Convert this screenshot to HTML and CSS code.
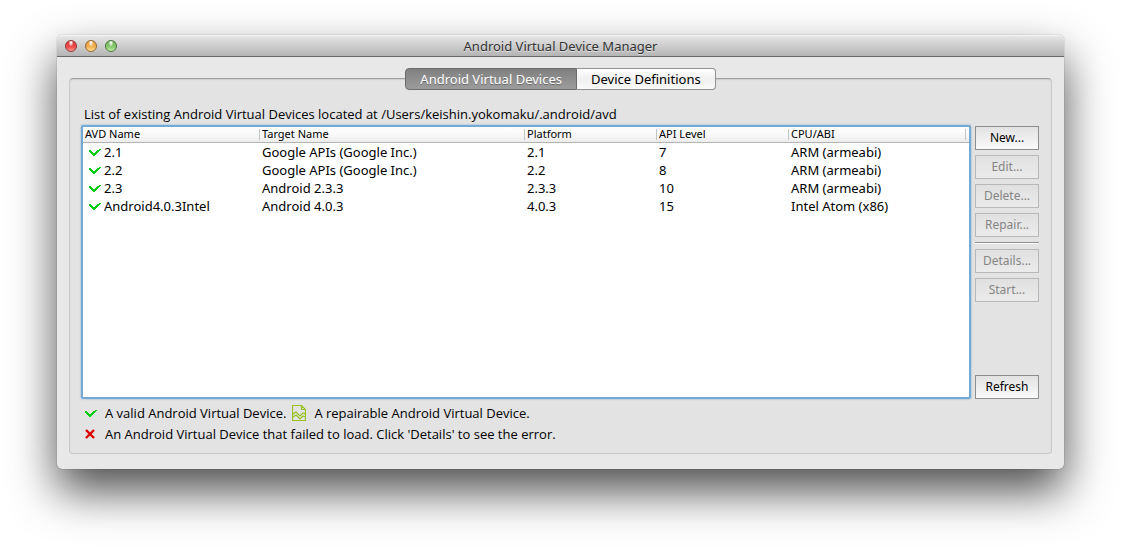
FILE: index.html
```html
<!DOCTYPE html>
<html lang="en">
<head>
<meta charset="utf-8">
<title>Android Virtual Device Manager</title>
<link rel="stylesheet" href="styles.css">
</head>
<body>
<svg class="defs" aria-hidden="true">
  <symbol id="check" viewBox="0 0 12 8"><path shape-rendering="crispEdges" d="M0 2h2v1h1v1h1v1h2V4h1V3h1V2h2V1h2v1h-1v1h-1v1H9v1H8v1H7v1H6v1H4V7H3V6H2V5H1V4H0z" fill="#00cc14"/></symbol>
  <symbol id="cross" viewBox="0 0 10 10"><path d="M1 1l8 8M9 1L1 9" stroke="#dc0000" stroke-width="2.4" fill="none"/></symbol>
  <symbol id="repair" viewBox="0 0 14 16"><path d="M.5.5h9l4 4v11H.5zM9.500.5v4h4M1 9l3-2 4 4 3-3 2 1M1 12l3-2 4 4 3-3 2 1" stroke="#98c11d" stroke-width="1.2" fill="none"/></symbol>
</svg>
<main class="window">
  <header class="titlebar">
    <div class="lights">
      <button class="light red" aria-label="Close"></button>
      <button class="light amber" aria-label="Minimize"></button>
      <button class="light green" aria-label="Zoom"></button>
    </div>
    <h1 class="title">Android Virtual Device Manager</h1>
  </header>
  <div class="content">
    <div class="tabs" role="tablist">
      <button class="tab selected" role="tab" aria-selected="true">Android Virtual Devices</button>
      <button class="tab" role="tab" aria-selected="false">Device Definitions</button>
    </div>
    <section class="panel">
      <p class="caption">List of existing Android Virtual Devices located at /Users/keishin.yokomaku/.android/avd</p>
      <div class="body">
        <div class="list" tabindex="0">
          <table class="devices">
            <colgroup><col class="c-name"><col class="c-target"><col class="c-small"><col class="c-small"><col class="c-cpu"><col></colgroup>
            <thead><tr><th>AVD Name</th><th>Target Name</th><th>Platform</th><th>API Level</th><th>CPU/ABI</th><th></th></tr></thead>
            <tbody>
              <tr><td><span class="name"><svg class="check"><use href="#check"/></svg>2.1</span></td><td>Google APIs (Google Inc.)</td><td>2.1</td><td>7</td><td>ARM (armeabi)</td><td></td></tr>
              <tr><td><span class="name"><svg class="check"><use href="#check"/></svg>2.2</span></td><td>Google APIs (Google Inc.)</td><td>2.2</td><td>8</td><td>ARM (armeabi)</td><td></td></tr>
              <tr><td><span class="name"><svg class="check"><use href="#check"/></svg>2.3</span></td><td>Android 2.3.3</td><td>2.3.3</td><td>10</td><td>ARM (armeabi)</td><td></td></tr>
              <tr><td><span class="name"><svg class="check"><use href="#check"/></svg>Android4.0.3Intel</span></td><td>Android 4.0.3</td><td>4.0.3</td><td>15</td><td>Intel Atom (x86)</td><td></td></tr>
            </tbody>
          </table>
        </div>
        <div class="actions">
          <button class="btn">New...</button>
          <button class="btn" disabled>Edit...</button>
          <button class="btn" disabled>Delete...</button>
          <button class="btn" disabled>Repair...</button>
          <hr class="rule">
          <button class="btn" disabled>Details...</button>
          <button class="btn" disabled>Start...</button>
          <button class="btn last">Refresh</button>
        </div>
      </div>
      <div class="legend">
        <div class="key"><span class="slot"><svg class="check"><use href="#check"/></svg></span><span>A valid Android Virtual Device.</span><svg class="repair"><use href="#repair"/></svg><span>A repairable Android Virtual Device.</span></div>
        <div class="key"><span class="slot"><svg class="cross"><use href="#cross"/></svg></span><span>An Android Virtual Device that failed to load. Click 'Details' to see the error.</span></div>
      </div>
    </section>
  </div>
</main>
</body>
</html>
```
FILE: styles.css
```css
* { box-sizing: border-box; }
body {
  margin: 0;
  min-height: 100vh;
  padding: 35px 57px 79px;
  display: flex;
  background: #fff;
  color: #000;
  font: 12px/18px "Noto Sans", "Open Sans", sans-serif;
}
button { font: inherit; margin: 0; padding: 0; }
.defs { position: absolute; width: 0; height: 0; }
.window {
  flex: 1;
  display: flex;
  flex-direction: column;
  background: #e8e8e8;
  border-radius: 5px;
  box-shadow: 0 0 1px rgba(0, 0, 0, .6), 0 22px 46px rgba(0, 0, 0, .7);
}
.titlebar {
  height: 22px;
  display: grid;
  grid-template-columns: 1fr auto 1fr;
  align-items: center;
  padding: 0 8px;
  border-bottom: 1px solid #686868;
  border-radius: 5px 5px 0 0;
  background: linear-gradient(#e8e8e8, #b4b4b4);
  box-shadow: inset 0 1px #f4f4f4;
}
.title { margin: 0; font-size: 13px; font-weight: 400; line-height: 20px; color: #333; text-shadow: 0 1px rgba(255, 255, 255, .5); }
.lights { display: flex; gap: 8px; }
.light { width: 12px; height: 12px; border: 1px solid #7a5a50; border-radius: 50%; }
.red { background: radial-gradient(ellipse at 50% 15%, #fff 0 5%, transparent 35%), linear-gradient(#d9403f, #f04a4a 60%, #ff9d98); border-color: #8c3533; }
.amber { background: radial-gradient(ellipse at 50% 15%, #fff 0 5%, transparent 35%), linear-gradient(#e09a45, #f2b352 60%, #ffe49a); border-color: #93662f; }
.green { background: radial-gradient(ellipse at 50% 15%, #fff 0 5%, transparent 35%), linear-gradient(#70b25c, #8aca70 60%, #c5f0a8); border-color: #477539; }
.content { flex: 1; display: flex; flex-direction: column; padding: 11px 12px 15px; }
.tabs { display: flex; align-self: center; z-index: 1; margin-bottom: -12px; }
.tab {
  height: 22px;
  padding: 0 14px;
  border: 1px solid #929292;
  border-left: 0;
  border-radius: 0 4px 4px 0;
  background: linear-gradient(#fff, #f0f0f0 50%, #fafafa);
  font-size: 13px;
  line-height: 18px;
}
.tab.selected {
  border: 1px solid #6c6c6c;
  border-radius: 4px 0 0 4px;
  background: linear-gradient(#808080, #9c9c9c);
  color: #fff;
  text-shadow: 0 1px rgba(0, 0, 0, .3);
}
.panel {
  flex: 1;
  display: flex;
  flex-direction: column;
  padding: 26px 12px 9px 11px;
  border: 1px solid #c8c8c8;
  border-top-color: #a0a0a0;
  border-radius: 4px;
  background: #e3e3e3;
  box-shadow: inset 0 1px 1px #ccc;
}
.caption { margin: 0 0 2px 3px; }
.caption, .legend { font-family: "Open Sans", "Noto Sans", sans-serif; font-size: 13px; }
.body { flex: 1; display: flex; gap: 4px; }
.list { flex: 1; min-width: 0; border: 2px solid #75a9d6; border-radius: 2px; background: #fff; box-shadow: 0 0 2px #75a9d6; outline: 0; }
.devices { width: 100%; table-layout: fixed; border-collapse: separate; border-spacing: 0; font-size: 13px; }
.c-name { width: 177px; }
.c-target { width: 265px; }
.c-small { width: 132px; }
.c-cpu { width: 177px; }
th, td { padding: 0 0 0 2px; text-align: left; font-weight: 400; white-space: nowrap; }
th {
  height: 16px;
  font-size: 11px;
  line-height: 14px;
  padding-bottom: 1px;
  border-bottom: 1px solid #b4b4b4;
  background: linear-gradient(#c4c4c4, #c4c4c4) right center / 1px 11px no-repeat, linear-gradient(#fff, #fafafa 45%, #ececec);
}
th:last-child { background: linear-gradient(#fff, #fafafa 45%, #ececec); }
td { height: 18px; line-height: 18px; }
.name { display: flex; align-items: center; gap: 3px; padding-left: 4px; }
.check { width: 12px; height: 8px; flex: none; }
.cross { width: 10px; height: 10px; }
.repair { width: 14px; height: 16px; margin: 0 8px 0 6px; }
.actions { width: 64px; display: flex; flex-direction: column; gap: 5px; padding-top: 1px; }
.btn { height: 24px; border: 1px solid #8e8e8e; background: linear-gradient(#e2e2e2, #fafafa); line-height: 22px; color: #000; }
.btn:disabled { border-color: #b8b8b8; background: linear-gradient(#e0e0e0, #ebebeb); color: #858585; }
.rule { width: 100%; height: 2px; margin: 0; border: 0; border-top: 1px solid #8e8e8e; border-bottom: 1px solid #fff; }
.last { margin-top: auto; }
.legend { padding-top: 3px; }
.key { display: flex; align-items: center; height: 21px; }
.slot { width: 20px; margin-left: 4px; display: flex; }
```
